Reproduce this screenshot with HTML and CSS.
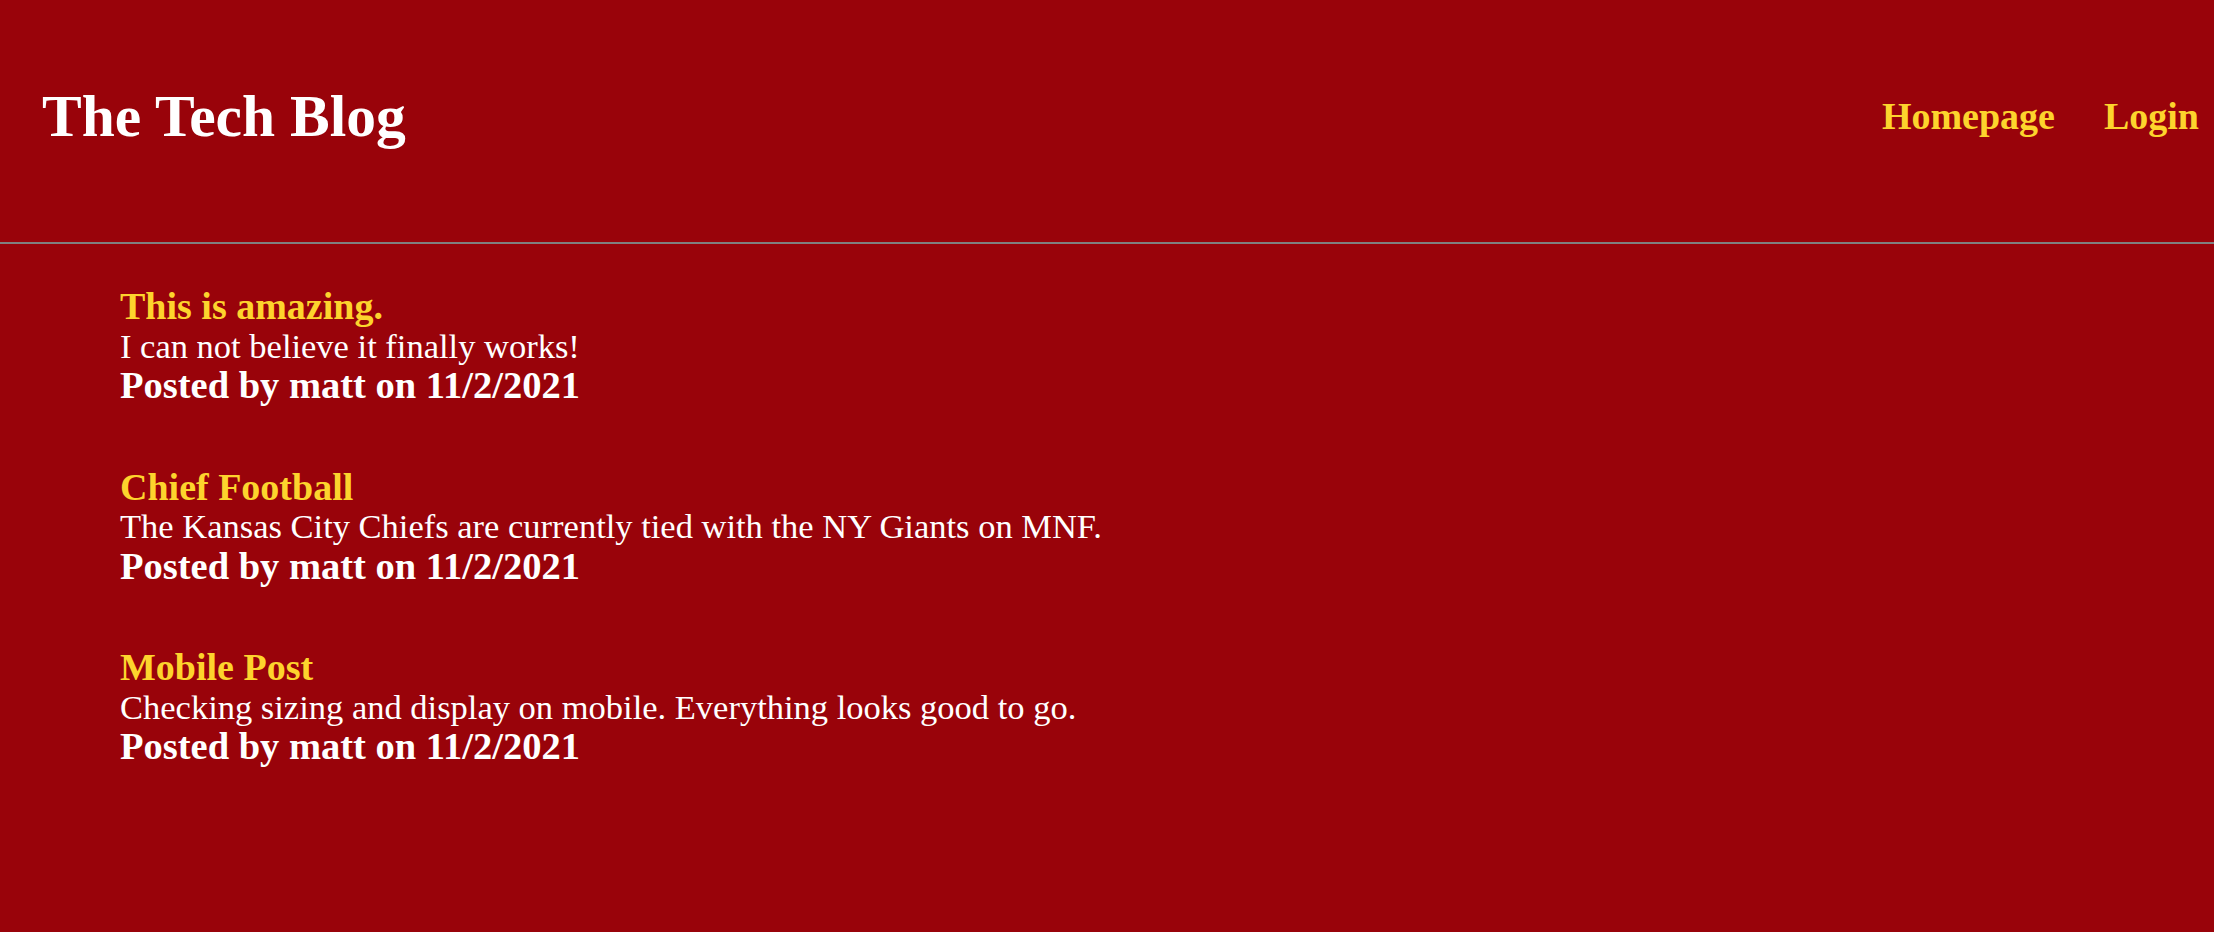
FILE: index.html
```html
<!DOCTYPE html>
<html lang="en">
<head>
<meta charset="utf-8">
<title>The Tech Blog</title>
<link rel="stylesheet" href="styles.css">
</head>
<body>
<header class="site-header">
  <h1 class="brand">The Tech Blog</h1>
  <nav class="nav">
    <a class="nav-link" href="#">Homepage</a>
    <a class="nav-link" href="#">Login</a>
  </nav>
</header>
<main class="posts">
  <article class="post">
    <a class="post-title" href="#">This is amazing.</a>
    <p class="post-body">I can not believe it finally works!</p>
    <p class="post-meta">Posted by matt on 11/2/2021</p>
  </article>
  <article class="post">
    <a class="post-title" href="#">Chief Football</a>
    <p class="post-body">The Kansas City Chiefs are currently tied with the NY Giants on MNF.</p>
    <p class="post-meta">Posted by matt on 11/2/2021</p>
  </article>
  <article class="post">
    <a class="post-title" href="#">Mobile Post</a>
    <p class="post-body">Checking sizing and display on mobile. Everything looks good to go.</p>
    <p class="post-meta">Posted by matt on 11/2/2021</p>
  </article>
</main>
</body>
</html>
```

FILE: styles.css
```css
html, body {
  margin: 0;
  padding: 0;
}

body {
  background: #99030a;
  color: #ffffff;
  font-family: "Liberation Serif", "Times New Roman", serif;
  min-height: 932px;
}

.site-header {
  display: flex;
  justify-content: space-between;
  align-items: center;
  height: 232px;
  padding: 0 15px 10px 42px;
  border-bottom: 2px solid #808080;
}

.brand {
  margin: 0;
  font-size: 59.5px;
  line-height: 59px;
  font-weight: bold;
  color: #ffffff;
}

.nav {
  display: flex;
  gap: 49px;
}

.nav-link {
  font-size: 38px;
  line-height: 38px;
  font-weight: bold;
  color: #fdd42d;
  text-decoration: none;
}

.posts {
  display: flex;
  flex-direction: column;
  gap: 62px;
  padding: 43px 0 0 120px;
}

.post {
  display: flex;
  flex-direction: column;
  align-items: flex-start;
}

.post-title {
  font-size: 38px;
  line-height: 39.5px;
  font-weight: bold;
  color: #fdd42d;
  text-decoration: none;
}

.post-body {
  margin: 0;
  font-size: 34.5px;
  line-height: 39.5px;
}

.post-meta {
  margin: 0;
  font-size: 38.5px;
  line-height: 39.5px;
  font-weight: bold;
}
```
